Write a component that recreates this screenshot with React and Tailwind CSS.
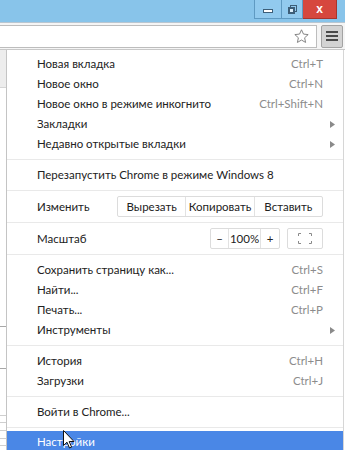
import React from "react";

const font = { fontFamily: 'Lato, "Liberation Sans", Arial, sans-serif' };

function Item({ label, shortcut, arrow }) {
  return (
    <div className="flex h-[20px] items-center pl-[30px] pr-[20px] text-[11.5px] text-[#222]">
      <span className="flex-1 whitespace-nowrap">{label}</span>
      {shortcut && <span className="text-[#8c8c8c]">{shortcut}</span>}
      {arrow && (
        <svg width="5" height="7" viewBox="0 0 5 7" className="mr-[-12px]">
          <path d="M0 0 L5 3.5 L0 7 Z" fill="#8a8a8a" />
        </svg>
      )}
    </div>
  );
}

function Sep() {
  return <div className="my-[5px] h-px bg-[#e9e9e9]" />;
}

export default function App() {
  return (
    <div className="relative flex h-[450px] w-[345px] flex-col overflow-hidden bg-white" style={font}>
      {/* title bar */}
      <div className="flex h-[22px] shrink-0 justify-end bg-[#88c4ea] pr-[8px]">
        <div className="flex h-[19px] w-[28px] items-center justify-center border border-t-0 border-[#5f9ac2] bg-[#92caee]">
          <div className="mt-[3px] h-[4px] w-[10px] border border-[#3d5e78] bg-white" />
        </div>
        <div className="flex h-[19px] w-[21px] items-center justify-center border border-l-0 border-t-0 border-[#5f9ac2] bg-[#92caee]">
          <div className="relative h-[9px] w-[9px]">
            <div className="absolute right-0 top-0 h-[7px] w-[7px] border border-[#3d5e78]" />
            <div className="absolute bottom-0 left-0 h-[7px] w-[7px] border-2 border-[#3d5e78] bg-[#dceefa]" />
          </div>
        </div>
        <div className="flex h-[19px] w-[34px] items-center justify-center border border-l-0 border-t-0 border-[#a8342d] bg-[#d6473e] text-[12px] font-bold leading-none text-white" style={{ fontFamily: '"Liberation Sans", sans-serif' }}>
          x
        </div>
      </div>
      {/* toolbar */}
      <div className="flex h-[28px] shrink-0 items-center border-t border-b border-[#b8c6d1] border-b-[#c8c8c8] bg-[#f5f5f5]">
        <div className="flex h-[23px] flex-1 items-center justify-end border border-l-0 border-[#bdbdbd] bg-white pr-[6px]">
          <svg width="17" height="17" viewBox="0 0 24 24">
            <path
              d="M12 2.5 L14.8 8.6 L21.4 9.3 L16.4 13.8 L17.8 20.4 L12 17 L6.2 20.4 L7.6 13.8 L2.6 9.3 L9.2 8.6 Z"
              fill="white"
              stroke="#7a7a7a"
              strokeWidth="1.3"
              strokeLinejoin="round"
            />
          </svg>
        </div>
        <div className="ml-[4px] mr-[2px] flex h-[23px] w-[22px] flex-col items-center justify-center gap-[2px] rounded-[2px] border border-[#a3a3a3] bg-[#d3d3d3]">
          <div className="h-[2px] w-[12px] bg-[#4a4a4a]" />
          <div className="h-[2px] w-[12px] bg-[#4a4a4a]" />
          <div className="h-[2px] w-[12px] bg-[#4a4a4a]" />
        </div>
      </div>
      {/* body */}
      <div className="flex flex-1 pr-[1px]">
        <div className="relative w-[6px] shrink-0">
          <div className="h-[38px] border-b border-[#d5d5d5] bg-[#ededed]" />
          <div className="absolute left-0 top-[276px] h-px w-[6px] bg-[#a8a8a8]" />
          <div className="absolute left-0 top-[318px] h-px w-[6px] bg-[#a8a8a8]" />
          <div className="absolute left-0 top-[365px] h-px w-[6px] bg-[#cfcfcf]" />
          <div className="absolute left-0 top-[372px] h-px w-[6px] bg-[#cfcfcf]" />
          <div className="absolute left-0 top-[380px] h-px w-[6px] bg-[#cfcfcf]" />
          <div className="absolute left-0 top-[388px] h-px w-[6px] bg-[#cfcfcf]" />
          <div className="absolute left-0 top-[395px] h-px w-[6px] bg-[#cfcfcf]" />
        </div>
        <div className="flex flex-1 flex-col border-l border-r border-[#c4c4c4] border-r-[#d6d6d6] bg-white pt-[4px]">
          <Item label="Новая вкладка" shortcut="Ctrl+T" />
          <Item label="Новое окно" shortcut="Ctrl+N" />
          <Item label="Новое окно в режиме инкогнито" shortcut="Ctrl+Shift+N" />
          <Item label="Закладки" arrow />
          <Item label="Недавно открытые вкладки" arrow />
          <Sep />
          <Item label="Перезапустить Chrome в режиме Windows 8" />
          <Sep />
          <div className="flex h-[21px] items-center pl-[30px] pr-[20px] text-[11.5px] text-[#222]">
            <span className="flex-1">Изменить</span>
            <div className="flex h-[21px] w-[206px] rounded-[2px] border border-[#dcdcdc]">
              <div className="flex flex-1 items-center justify-center border-r border-[#e2e2e2]">Вырезать</div>
              <div className="flex flex-1 items-center justify-center border-r border-[#e2e2e2]">Копировать</div>
              <div className="flex flex-1 items-center justify-center">Вставить</div>
            </div>
          </div>
          <Sep />
          <div className="flex h-[21px] items-center pl-[30px] pr-[20px] text-[11.5px] text-[#222]">
            <span className="flex-1">Масштаб</span>
            <div className="flex h-[21px] w-[70px] rounded-[2px] border border-[#dcdcdc]">
              <div className="flex w-[18px] items-center justify-center border-r border-[#e2e2e2]">–</div>
              <div className="flex flex-1 items-center justify-center border-r border-[#e2e2e2]">100%</div>
              <div className="flex w-[18px] items-center justify-center">+</div>
            </div>
            <div className="ml-[7px] flex h-[21px] w-[36px] items-center justify-center rounded-[2px] border border-[#dcdcdc]">
              <svg width="14" height="11" viewBox="0 0 14 11">
                <path d="M0.5 3 V0.5 H3 M11 0.5 H13.5 V3 M13.5 8 V10.5 H11 M3 10.5 H0.5 V8" fill="none" stroke="#8a8a8a" strokeWidth="1" />
              </svg>
            </div>
          </div>
          <Sep />
          <Item label="Сохранить страницу как..." shortcut="Ctrl+S" />
          <Item label="Найти..." shortcut="Ctrl+F" />
          <Item label="Печать..." shortcut="Ctrl+P" />
          <Item label="Инструменты" arrow />
          <Sep />
          <Item label="История" shortcut="Ctrl+H" />
          <Item label="Загрузки" shortcut="Ctrl+J" />
          <Sep />
          <Item label="Войти в Chrome..." />
          <div className="mt-[5px] h-px bg-[#e9e9e9]" />
          <div className="mt-[3px] flex h-[22px] items-center bg-[#4a87e6] pl-[30px] text-[11.5px] text-white">
            Настройки
          </div>
        </div>
      </div>
      {/* cursor */}
      <svg className="absolute left-[63px] top-[430px]" width="12" height="19" viewBox="0 0 12 19">
        <path d="M0.5 0.5 V15.5 L4 12.2 L6.5 18 L8.6 17.1 L6.2 11.5 L11 11.5 Z" fill="white" stroke="#111" strokeWidth="1" />
      </svg>
    </div>
  );
}
